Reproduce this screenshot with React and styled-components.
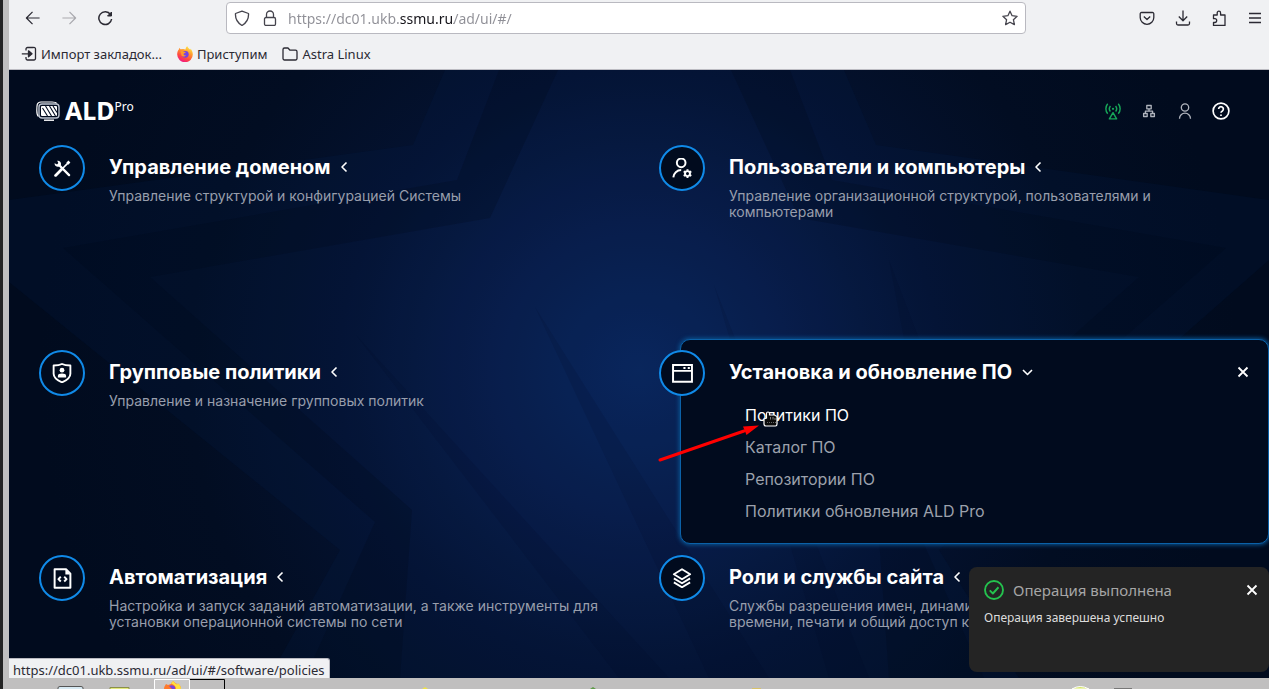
import { useState } from "react";
import styled, { createGlobalStyle } from "styled-components";

const GlobalStyle = createGlobalStyle`
  * {
    box-sizing: border-box;
  }

  body {
    margin: 0;
    overflow: hidden;
    background: #c0bfbf;
    font-family: "Noto Sans", sans-serif;
  }

  button {
    display: flex;
    align-items: center;
    justify-content: center;
    padding: 0;
    border: none;
    background: none;
    color: inherit;
    font: inherit;
    cursor: pointer;
  }

  a {
    color: inherit;
    text-decoration: none;
  }

  svg {
    flex-shrink: 0;
  }
`;

const PATHS = {
  back: <path d="M15.5 8.5H1.5M8 2 1.5 8.5 8 15" />,
  forward: <path d="M1.5 8.5h14M9 2l6.5 6.5L9 15" />,
  reload: (
    <>
      <path d="M13.500 4.500A6.400 6.400 0 1 0 14.600 9" />
      <path d="M14.500 2V6h-4z" fill="currentColor" strokeWidth="1" />
    </>
  ),
  shield: <path d="M8 1.200 14.500 3.500c.400 5.500-1.500 9-6.500 12C3 12.500 1.100 9 1.500 3.500z" />,
  lock: (
    <>
      <rect x="2.500" y="7.500" width="11" height="8" rx="1.500" />
      <path d="M4.500 7.500V4.500a3.500 3.500 0 0 1 7 0v3" />
    </>
  ),
  star: <path d="m8 1.200 2.100 4.500 5 .600-3.700 3.400 1 4.900L8 12.200l-4.400 2.400 1-4.900L.900 6.300l5-.600z" />,
  pocket: (
    <>
      <path d="M2.500 2.500h11a1.300 1.300 0 0 1 1.300 1.300V7.500a6.800 6.800 0 0 1-13.600 0V3.800a1.300 1.300 0 0 1 1.300-1.300z" />
      <path d="m4.800 6.500 3.200 3 3.200-3" />
    </>
  ),
  download: <path d="M8 .500v10M3.800 6.500 8 10.700l4.200-4.200M1.500 11.500v2a1.500 1.500 0 0 0 1.500 1.500h10a1.500 1.500 0 0 0 1.500-1.500v-2" />,
  puzzle: (
    <path d="M2.500 5h3.700V2.900a1.700 1.700 0 0 1 3.400 0V5H14v10.500H2.500V12.500h1.300a1.900 1.900 0 0 0 0-3.800H2.500z" />
  ),
  menu: <path d="M2 3.500h12M2 8h12M2 12.500h12" />,
  importTo: (
    <>
      <path d="M5 4.500V3a1.500 1.500 0 0 1 1.500-1.500h6A1.500 1.500 0 0 1 14.500 3v9.500a1.500 1.500 0 0 1-1.500 1.500H6.500A1.500 1.500 0 0 1 5 12.500V11M.800 7.800H10" />
      <path d="M7.500 4.800 11 7.800l-3.500 3z" fill="currentColor" />
    </>
  ),
  folder: <path d="M1 12.500v-9A1.500 1.500 0 0 1 2.500 2H6l2 2.200h5.500A1.500 1.500 0 0 1 15 5.700v6.800a1.500 1.500 0 0 1-1.500 1.500h-11A1.500 1.500 0 0 1 1 12.500z" />,
  antenna: (
    <>
      <path d="M3.300 1.500a7 7 0 0 0 0 9M12.700 1.500a7 7 0 0 1 0 9M5.700 3.500a4 4 0 0 0 0 5M10.300 3.500a4 4 0 0 1 0 5" />
      <circle cx="8" cy="6" r="1" fill="currentColor" stroke="none" />
      <path d="M8 9.500 11.200 15H4.800z" />
    </>
  ),
  network: (
    <>
      <path d="M5.800 2.500h4.400v3.300H5.800zM2.600 10.500h3.600v3H2.600zM9.800 10.500h3.600v3H9.800z" />
      <path d="M8 5.800v2.400M4.400 10.500V8.200h7.200v2.300" />
    </>
  ),
  user: (
    <>
      <circle cx="8" cy="4.500" r="3.700" />
      <path d="M2.500 15.700a5.500 5.500 0 0 1 11 0" />
    </>
  ),
  help: (
    <>
      <circle cx="8" cy="8" r="7" />
      <path d="M5.900 6.300a2.100 2.100 0 1 1 3.300 1.700c-.800.500-1.200.800-1.200 1.600M8 11.100v1.400" />
    </>
  ),
  tools: (
    <>
      <path d="m1.500 14.500 6-6" strokeWidth="2.600" strokeLinecap="round" />
      <path d="m8 8 6-6" strokeWidth="1.600" />
      <path d="m12.500 3.500 2-2" strokeWidth="2.600" />
      <path d="M4.500 4.500 14.200 14.200" strokeWidth="2.200" strokeLinecap="round" />
      <path d="M3 .800a3 3 0 0 1 3.500 3.700L4.500 6.300A3 3 0 0 1 .600 3l2.300 1.200 1.200-1.300z" fill="currentColor" stroke="none" />
    </>
  ),
  userCog: (
    <>
      <circle cx="7" cy="3.700" r="3.300" />
      <path d="M1 14.800a6 6 0 0 1 6-5.600" />
      <circle cx="11.800" cy="11.900" r="1.900" />
      <path d="M11.800 8.500v1.300M11.800 14v1.300M8.900 10.200l1.100.600M13.600 13l1.100.600M8.900 13.600 10 13M13.600 10.800l1.100-.600" />
    </>
  ),
  badge: (
    <>
      <path d="M8 .800c2 1 4.500 1.200 6.700 1.200v6.500c0 3-2.800 5.200-6.700 7-3.900-1.800-6.700-4-6.700-7V2C3.500 2 6 1.800 8 .800z" />
      <circle cx="8" cy="5.700" r="1.900" fill="currentColor" stroke="none" />
      <path d="M4.700 11.500V10.300C4.700 8.800 6 8.300 8 8.300s3.300.500 3.300 2v1.200z" fill="currentColor" stroke="none" />
    </>
  ),
  windowApp: (
    <>
      <path d="M.800 1.500h14.400v12.800H.800zM.800 6h14.400" strokeLinejoin="miter" />
      <path d="M8.700 3h1.600v1.500H8.700zM12 3h1.600v1.500H12z" fill="currentColor" stroke="none" />
    </>
  ),
  script: (
    <>
      <path d="M2 1h8.700L14 4.300V15H2z" />
      <path d="M10.200 1v4H14z" fill="currentColor" stroke="none" />
      <path d="M6.700 6.700 4.900 8.500l1.800 1.800M9.300 6.700l1.800 1.800-1.800 1.800" />
    </>
  ),
  layers: <path d="m8 1 6.500 4L8 9 1.500 5zM1.500 8.300 8 12.200l6.500-3.900M1.500 11.500 8 15.400l6.500-3.900" />,
  caretLeft: <path d="M10.500 3.500 6 8l4.500 4.500" />,
  caretDown: <path d="m6 6 4.500 4.500L15 6" />,
  close: <path d="m3.500 3.500 9 9M12.500 3.500l-9 9" />,
  success: (
    <>
      <circle cx="8" cy="8" r="7.200" />
      <path d="m4.600 8.300 2.500 2.500 4.500-5" />
    </>
  ),
};

function Icon({ name, size = 16, weight = 1.3 }) {
  return (
    <svg
      width={size}
      height={size}
      viewBox={name === "back" || name === "forward" ? "0 0 17 17" : "0 0 16 16"}
      fill="none"
      stroke="currentColor"
      strokeWidth={weight}
      strokeLinejoin="round"
      aria-hidden="true"
    >
      {PATHS[name]}
    </svg>
  );
}

function FirefoxIcon({ size = 16 }) {
  return (
    <svg width={size} height={size} viewBox="0 0 16 16" aria-hidden="true">
      <defs>
        <linearGradient id="fox" x1="0.8" y1="0" x2="0.3" y2="1">
          <stop offset="0" stopColor="#fff44f" />
          <stop offset="0.35" stopColor="#ffa02f" />
          <stop offset="0.7" stopColor="#ff4a3d" />
          <stop offset="1" stopColor="#f0148c" />
        </linearGradient>
      </defs>
      <path
        d="M10.300.200c.500 1.600 2 2.300 3 3.500.200-.500.200-.900.100-1.300 1.500 1.500 2.400 3.800 2.400 6A7.800 7.800 0 0 1 .200 8.500C.200 6.300.800 4.600 2 3.200L2.300 1.700l1.200 1.500 2.700-.200L8.600 3.500C8.500 2.300 9.200.900 10.300.200z"
        fill="url(#fox)"
      />
      <circle cx="8.300" cy="8.300" r="3.400" fill="#7542e5" />
      <path d="M3.500 5.500C5 4.800 6 5 7 5.800l1.800.200c-.200 1-1.300 1.100-2 1.400-.600 1.400.500 2.200 2.200 1.800-1 1.400-3.200 1.800-4.500.300z" fill="#ff9a2a" />
    </svg>
  );
}

function LogoIcon() {
  return (
    <svg width="24" height="20" viewBox="0 0 24 20" fill="none" stroke="#fff" aria-hidden="true">
      <path d="M2.500 15.500C.800 14 .800 12 .800 9.500.800 4 .800 1 5 1h11c2.500 0 4 .200 4.700 1.500" strokeWidth="1.200" />
      <rect x="3" y="3" width="20" height="14" rx="3" stroke="#bcc3cf" strokeWidth="1.400" />
      <rect x="5" y="5" width="16" height="10" rx="1" fill="#fff" stroke="none" />
      <path d="m6.500 7 5 8M9.500 5l6 10M13.500 5l6 10M17 5l4 6.500" stroke="#020c20" strokeWidth="1.100" />
      <path d="M8 19.200h10" strokeWidth="1.400" />
    </svg>
  );
}

function StarBackdrop() {
  return (
    <Backdrop viewBox="0 0 1260 608" preserveAspectRatio="xMidYMin slice" aria-hidden="true">
      <defs>
        <radialGradient id="glow" gradientUnits="userSpaceOnUse" cx="630" cy="300" r="600">
          <stop offset="0" stopColor="#0a265c" />
          <stop offset="0.25" stopColor="#081c48" />
          <stop offset="0.5" stopColor="#041230" />
          <stop offset="0.75" stopColor="#020d22" />
          <stop offset="1" stopColor="#010b1e" />
        </radialGradient>
      </defs>
      <rect width="1260" height="608" fill="url(#glow)" />
      <path
        d="M0 130 404 75 436 0H835L867 75 1260 130V190L930 480 1010 608H260L331 480 0 212z"
        fill="#0c2a66"
        fillOpacity="0.12"
      />
      <path
        fillRule="evenodd"
        d="M54 178 448 110 490 0H781L823 110 1217 178 905 452 975 608H296L366 452zM141 207 481 148 549 0H722L790 148 1130 207 868 440 880 608H391L403 440z"
        fill="#000818"
        fillOpacity="0.22"
      />
      <path
        d="M347 265 610 608H660zM526 237 700 608H760zM705 215 860 608H820zM880 190 960 400H920z"
        fill="#000a20"
        fillOpacity="0.12"
      />
    </Backdrop>
  );
}

const SECTIONS = [
  {
    icon: "tools",
    title: "Управление доменом",
    text: "Управление структурой и конфигурацией Системы",
  },
  {
    icon: "userCog",
    iconSize: 21,
    title: "Пользователи и компьютеры",
    text: "Управление организационной структурой, пользователями и компьютерами",
  },
  {
    icon: "badge",
    iconSize: 20,
    title: "Групповые политики",
    text: "Управление и назначение групповых политик",
  },
  {
    icon: "windowApp",
    iconSize: 21,
    title: "Установка и обновление ПО",
    links: ["Политики ПО", "Каталог ПО", "Репозитории ПО", "Политики обновления ALD Pro"],
  },
  {
    icon: "script",
    iconSize: 21,
    title: "Автоматизация",
    text: "Настройка и запуск заданий автоматизации, а также инструменты для установки операционной системы по сети",
  },
  {
    icon: "layers",
    iconSize: 20,
    title: "Роли и службы сайта",
    text: "Службы разрешения имен, динамической настройки, синхронизации времени, печати и общий доступ к файлам",
  },
];

function Section({ section }) {
  const isOpen = Boolean(section.links);

  return (
    <Card $open={isOpen}>
      <IconCircle>
        <Icon name={section.icon} size={section.iconSize || 17} weight={1.5} />
      </IconCircle>
      <CardBody>
        <CardHeading>
          <TitleButton type="button" aria-expanded={isOpen}>
            {section.title}
            <Icon name={isOpen ? "caretDown" : "caretLeft"} weight={1.6} />
          </TitleButton>
          {isOpen && (
            <CloseButton type="button" aria-label="Закрыть">
              <Icon name="close" weight={1.8} />
            </CloseButton>
          )}
        </CardHeading>
        {section.text && <CardText>{section.text}</CardText>}
        {isOpen && (
          <LinkList>
            {section.links.map((link, index) => (
              <LinkItem key={link} $active={index === 0}>
                <a href="#/software/policies">{link}</a>
                {index === 0 && <Pointer />}
              </LinkItem>
            ))}
          </LinkList>
        )}
      </CardBody>
    </Card>
  );
}

function Pointer() {
  return (
    <PointerLayer width="120" height="56" viewBox="0 0 120 56" aria-hidden="true">
      <path d="M2 50 86 21" stroke="#f00" strokeWidth="3" strokeLinecap="round" />
      <path d="M101 15.500 85 16.500 88.500 25z" fill="#f00" />
      <g transform="translate(105 1)">
        <path
          d="M3.500 7V2.500Q3.500 1 5 1t1.500 1.500V4h5l2.500 1.500V13q0 2-1.500 2H3q-2 0-2-2V8z"
          fill="#0b0b0b"
          stroke="#fff"
          strokeWidth="1.200"
        />
        <path d="M7.500 6v2.500M10 6v2.500M12 7v2" stroke="#999" strokeWidth="0.800" />
        <path d="M4 11.500h9" stroke="#666" strokeDasharray="1 1" />
      </g>
    </PointerLayer>
  );
}

export default function App() {
  const [url, setUrl] = useState("https://dc01.ukb.ssmu.ru/ad/ui/#/");

  return (
    <>
      <GlobalStyle />
      <Desktop>
        <Browser>
          <Toolbar>
            <ButtonGroup>
              <ToolButton type="button" aria-label="Назад">
                <Icon name="back" />
              </ToolButton>
              <ToolButton type="button" aria-label="Вперёд" $muted>
                <Icon name="forward" />
              </ToolButton>
              <ToolButton type="button" aria-label="Обновить">
                <Icon name="reload" weight={1.5} />
              </ToolButton>
            </ButtonGroup>
            <AddressBar>
              <Icon name="shield" />
              <Icon name="lock" />
              <AddressInput aria-label="Адрес" value={url} onChange={(e) => setUrl(e.target.value)} />
              <button type="button" aria-label="В закладки">
                <Icon name="star" />
              </button>
            </AddressBar>
            <ButtonGroup $end>
              <ToolButton type="button" aria-label="Pocket">
                <Icon name="pocket" />
              </ToolButton>
              <ToolButton type="button" aria-label="Загрузки">
                <Icon name="download" />
              </ToolButton>
              <ToolButton type="button" aria-label="Расширения">
                <Icon name="puzzle" />
              </ToolButton>
              <ToolButton type="button" aria-label="Меню">
                <Icon name="menu" />
              </ToolButton>
            </ButtonGroup>
          </Toolbar>
          <Bookmarks>
            <Bookmark href="#import">
              <Icon name="importTo" />
              Импорт закладок...
            </Bookmark>
            <Bookmark href="#start">
              <FirefoxIcon />
              Приступим
            </Bookmark>
            <Bookmark href="#astra">
              <Icon name="folder" />
              Astra Linux
            </Bookmark>
          </Bookmarks>

          <Page>
            <StarBackdrop />
            <Header>
              <Logo href="#/">
                <LogoIcon />
                <LogoName>ALD</LogoName>
                <LogoSuffix>Pro</LogoSuffix>
              </Logo>
              <HeaderActions>
                <HeaderButton type="button" aria-label="Состояние" $color="#17a558">
                  <Icon name="antenna" size={18} />
                </HeaderButton>
                <HeaderButton type="button" aria-label="Сеть">
                  <Icon name="network" />
                </HeaderButton>
                <HeaderButton type="button" aria-label="Профиль">
                  <Icon name="user" />
                </HeaderButton>
                <HeaderButton type="button" aria-label="Справка" $color="#fff">
                  <Icon name="help" size={18} weight={1.5} />
                </HeaderButton>
              </HeaderActions>
            </Header>
            <Sections>
              {SECTIONS.map((section) => (
                <Section key={section.title} section={section} />
              ))}
            </Sections>
            <Toast role="status">
              <ToastHeading>
                <ToastMark>
                  <Icon name="success" size={20} weight={1.5} />
                </ToastMark>
                <ToastTitle>Операция выполнена</ToastTitle>
                <button type="button" aria-label="Закрыть уведомление">
                  <Icon name="close" weight={1.8} />
                </button>
              </ToastHeading>
              <ToastText>Операция завершена успешно</ToastText>
            </Toast>
            <StatusLine>https://dc01.ukb.ssmu.ru/ad/ui/#/software/policies</StatusLine>
          </Page>
        </Browser>
        <Taskbar>
          <svg width="1260" height="11" viewBox="9 678 1260 11" aria-hidden="true">
            <path d="M58 689v-1q0-1.500 2-1.500h21q2 0 2 1.500v1" fill="#d7e9f2" stroke="#555" />
            <path d="M110 689v-1.500h19v1.500" fill="#e2e97c" stroke="#8b8f4a" />
            <path d="M189.500 679.500H224.500V689" fill="none" stroke="#000" />
            <path d="M154.500 689V679.500H189.500V689" fill="#c9c8c8" stroke="#fff" />
            <path d="M164 689c0-2 1-3.500 2-5l2 1 3-1c0-1 1-2 2.500-3 1 2 3 2 3.500 3.500l1-1c2 1.500 3 3.500 3 5.500z" fill="#ff7a2c" />
            <path d="M171 683.500q1-2 2.500-2.500 1 2 3.500 3.500l1-1q3 2 3 5.500h-5q0-4-5-5.500z" fill="#ffdf3f" />
            <path d="M169 686q4-2 6 1v2h-3z" fill="#7b43dd" />
            <path d="m422 689 3-2 3 2z" fill="#efe24a" />
            <path d="m590 689 3-2 3 2z" fill="#5e9a48" />
            <path d="M752 689v-1h9v1z" fill="#d8c26a" />
            <path d="M1072 689q8-5 17 0z" fill="#d6e667" stroke="#fff" />
            <path d="M1114 689v-1h18v1z" fill="#777" />
          </svg>
        </Taskbar>
      </Desktop>
    </>
  );
}

const Desktop = styled.div`
  display: flex;
  flex-direction: column;
  height: 100vh;
  padding-left: 6px;
  border-left: 3px solid #242424;
  background: #c0bfbf;
`;

const Browser = styled.div`
  display: flex;
  flex: 1;
  flex-direction: column;
  min-height: 0;
  background: #f0f1f3;
  color: #2b2a33;
  font-size: 13px;
`;

const Toolbar = styled.div`
  display: flex;
  align-items: center;
  justify-content: space-between;
  height: 36px;
  padding-left: 6px;
`;

const ButtonGroup = styled.div`
  display: flex;
  margin-right: ${({ $end }) => ($end ? "-4px" : "0")};
`;

const ToolButton = styled.button`
  width: 36px;
  height: 32px;
  color: ${({ $muted }) => ($muted ? "#a9a9ae" : "#2b2a33")};
`;

const AddressBar = styled.div`
  display: flex;
  flex: 0 1 800px;
  align-items: center;
  gap: 12px;
  height: 32px;
  padding: 0 7px;
  border: 1px solid #b9b9c0;
  border-radius: 4px;
  background: #fff;
  color: #45444d;
`;

/* the domain part of the address is darker than the rest */
const AddressInput = styled.input`
  flex: 1;
  min-width: 0;
  padding: 0;
  margin-left: -2px;
  border: none;
  outline: none;
  background: linear-gradient(to right, #8f8f96 112px, #15141a 112px, #15141a 166px, #8f8f96 166px);
  background-clip: text;
  color: transparent;
  font: 14px "Noto Sans", sans-serif;
`;

const Bookmarks = styled.nav`
  display: flex;
  align-items: center;
  gap: 15px;
  height: 34px;
  padding: 2px 0 0 12px;
  border-bottom: 1px solid #bcbcc2;
`;

const Bookmark = styled.a`
  display: flex;
  align-items: center;
  gap: 4px;
`;

const Page = styled.main`
  position: relative;
  flex: 1;
  min-height: 0;
  overflow: hidden;
  background: #010b1e;
  color: #fff;
  font-family: Inter, sans-serif;
`;

const Backdrop = styled.svg`
  position: absolute;
  inset: 0;
  width: 100%;
  height: 100%;
`;

const Header = styled.header`
  position: relative;
  display: flex;
  align-items: center;
  justify-content: space-between;
  height: 64px;
  padding: 18px 30px 0 27px;
`;

const Logo = styled.a`
  display: flex;
  align-items: center;
  font-family: "Noto Sans", sans-serif;
`;

const LogoName = styled.span`
  margin-left: 5px;
  font-size: 25px;
  font-weight: 700;
  line-height: 22px;
  padding-bottom: 2px;
`;

const LogoSuffix = styled.sup`
  align-self: flex-start;
  font-size: 12px;
  line-height: 16px;
`;

const HeaderActions = styled.div`
  display: flex;
`;

const HeaderButton = styled.button`
  width: 36px;
  height: 32px;
  color: ${({ $color }) => $color || "#b0b4bd"};
`;

const Sections = styled.div`
  display: grid;
  grid-template-columns: 1fr 1fr;
  grid-auto-rows: minmax(205px, auto);
  column-gap: 10px;
  padding-left: 30px;
`;

const Card = styled.section`
  position: relative;
  display: flex;
  gap: 24px;
  padding-top: 11px;

  &::before {
    content: "";
    display: ${({ $open }) => ($open ? "block" : "none")};
    position: absolute;
    inset: 0 0 0 21px;
    border: 1px solid #0b61a8;
    border-radius: 10px;
    background: #010b1e;
    box-shadow: 0 0 4px 1px #0a5594;
  }
`;

const IconCircle = styled.div`
  position: relative;
  display: flex;
  flex-shrink: 0;
  align-items: center;
  justify-content: center;
  width: 46px;
  height: 46px;
  border: 2px solid #108ae8;
  border-radius: 50%;
  background: #010b1e;
`;

const CardBody = styled.div`
  position: relative;
  flex: 1;
  padding-top: 10px;
`;

const CardHeading = styled.div`
  display: flex;
  align-items: center;
  justify-content: space-between;
  padding-right: 16px;
`;

const TitleButton = styled.button`
  gap: 5px;
  font-size: 20px;
  font-weight: 700;
  line-height: 24px;
`;

const CloseButton = styled.button`
  width: 20px;
  height: 20px;
`;

const CardText = styled.p`
  margin: 9px 22px 0 0;
  color: #989eac;
  font-size: 14px;
  font-weight: 400;
  line-height: 16px;
`;

const LinkList = styled.ul`
  margin: 15px 0 0;
  padding: 0 0 0 16px;
  list-style: none;
`;

const LinkItem = styled.li`
  position: relative;
  color: ${({ $active }) => ($active ? "#fff" : "#9ca1ac")};
  font-size: 16px;
  font-weight: 400;
  line-height: 32px;
`;

const PointerLayer = styled.svg`
  position: absolute;
  top: 11px;
  left: -87px;
  pointer-events: none;
`;

const Toast = styled.aside`
  position: absolute;
  right: 0;
  bottom: 6px;
  width: 300px;
  min-height: 105px;
  padding: 12px 9px 12px 15px;
  border-radius: 8px;
  background: #242424;
  font-family: "Noto Sans", sans-serif;
`;

const ToastHeading = styled.div`
  display: flex;
  align-items: center;
`;

const ToastMark = styled.span`
  display: flex;
  color: #24c24e;
`;

const ToastTitle = styled.strong`
  flex: 1;
  margin-left: 9px;
  color: #a6a6a6;
  font-size: 15px;
  font-weight: 400;
  line-height: 22px;
`;

const ToastText = styled.p`
  margin: 9px 0 0;
  color: #dcdcdc;
  font-size: 12px;
  line-height: 16px;
`;

const StatusLine = styled.div`
  position: absolute;
  bottom: 0;
  left: 0;
  padding: 3px 4px 0;
  border-top: 1px solid #b9b9c0;
  border-right: 1px solid #b9b9c0;
  border-top-right-radius: 3px;
  background: #f0f1f3;
  color: #2b2a33;
  font-family: "Noto Sans", sans-serif;
  font-size: 13px;
  line-height: 16px;
`;

const Taskbar = styled.footer`
  display: flex;
  height: 11px;
  overflow: hidden;
`;
